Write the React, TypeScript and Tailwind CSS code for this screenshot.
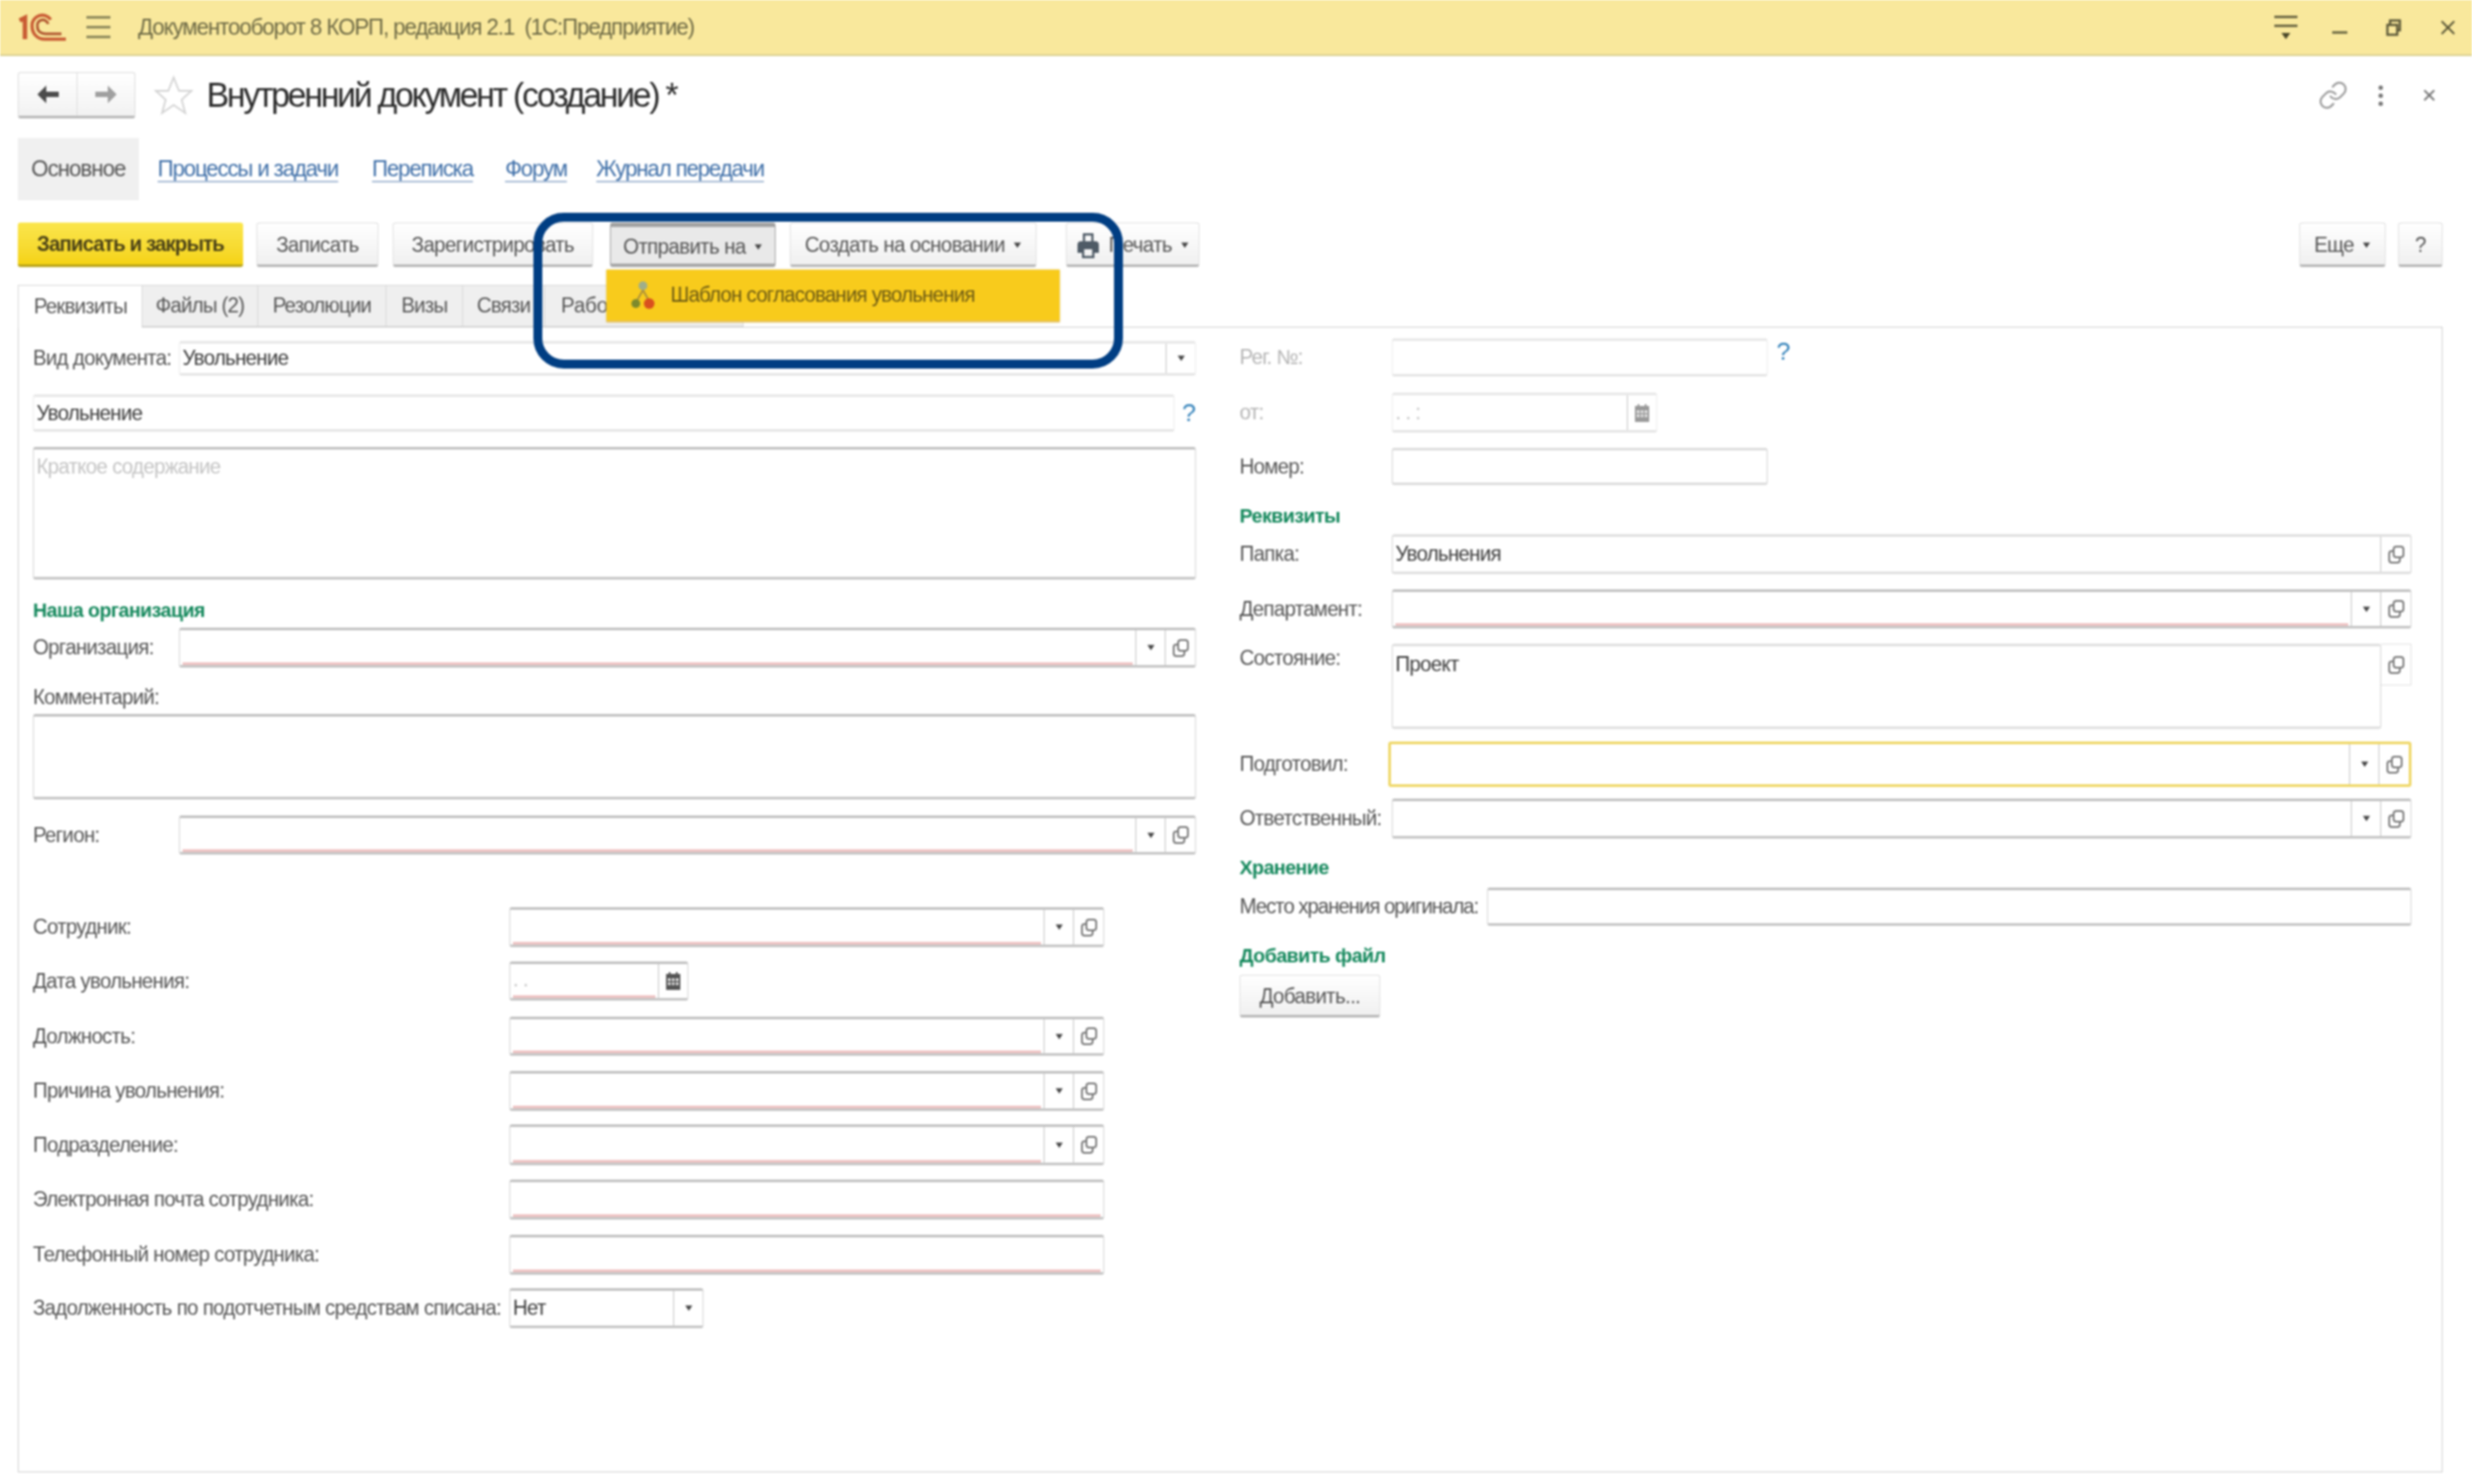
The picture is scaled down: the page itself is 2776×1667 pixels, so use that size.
import React from 'react';
import clsx from 'clsx';
import { Link as LinkIcon, X } from 'lucide-react';

const Caret = () => (
  <svg width="9" height="7" viewBox="0 0 9 7" className="shrink-0">
    <path d="M0.5 0.5h8L4.5 6.5z" fill="#444" />
  </svg>
);

const CopyIcon = () => (
  <svg width="20" height="24" viewBox="0 0 20 24" fill="none" stroke="#777" strokeWidth="2">
    <rect x="7" y="3" width="11" height="12" rx="3" />
    <path d="M7 8H5a3 3 0 0 0-3 3v7a3 3 0 0 0 3 3h6a3 3 0 0 0 3-3v-3" />
  </svg>
);

const CalendarIcon = ({ light }: { light?: boolean }) => (
  <svg width="18" height="22" viewBox="0 0 18 22" fill={light ? '#9a9a9a' : '#555'}>
    <path d="M1 3h3V1h2v2h6V1h2v2h3v18H1z" />
    <path d="M3 8h3v3H3zM7.5 8h3v3h-3zM12 8h3v3h-3zM3 12.5h3v3H3zM7.5 12.5h3v3h-3zM12 12.5h3v3h-3z" fill="#e8e8e8" />
  </svg>
);

const Heading = ({ className, children }: { className?: string; children: React.ReactNode }) => (
  <div className={clsx('h-[24px] flex items-center text-[22px] font-bold tracking-[-0.6px] text-[#14885c]', className)}>{children}</div>
);

type FieldProps = {
  className?: string;
  value?: string;
  required?: boolean;
  drop?: boolean;
  copy?: boolean;
  calendar?: boolean;
  disabled?: boolean;
  focus?: boolean;
  placeholder?: string;
};

const Field = ({ className, value, required, drop, copy, calendar, disabled, focus, placeholder }: FieldProps) => (
  <div
    className={clsx(
      'flex rounded-[3px] bg-white',
      disabled
        ? 'border border-[#ececec] border-t-[3px] border-t-[#e8e8e8] border-b-[3px] border-b-[#e6e6e6]'
        : focus
          ? 'border-[3px] border-[#efd765]'
          : 'border border-[#d4d4d4] border-t-[3px] border-t-[#c2c2c2] border-b-[3px] border-b-[#c6c6c6]',
      className,
    )}
  >
    <div className={clsx('flex-1 min-w-0 flex pl-[3px]', required && 'mx-[3px] !pl-0 border-b-[3px] border-b-[#efc3c3]')}>
      <span className={clsx('self-center text-[23px] tracking-[-0.8px]', placeholder ? 'text-[#c4c4c4]' : 'text-[#3c3c3c]')}>
        {value ?? placeholder}
      </span>
    </div>
    {drop && (
      <div className="w-[33px] shrink-0 flex items-center justify-center border-l border-[#c4c4c4]">
        <Caret />
      </div>
    )}
    {calendar && (
      <div className="w-[33px] shrink-0 flex items-center justify-center border-l border-[#c4c4c4]">
        <CalendarIcon light={disabled} />
      </div>
    )}
    {copy && (
      <div className="w-[34px] shrink-0 flex items-center justify-center border-l border-[#c4c4c4]">
        <CopyIcon />
      </div>
    )}
  </div>
);

const Label = ({ className, children, disabled }: { className?: string; children: React.ReactNode; disabled?: boolean }) => (
  <div className={clsx('shrink-0 text-[23px] tracking-[-0.8px]', disabled ? 'text-[#b4b4b4]' : 'text-[#555]', className)}>{children}</div>
);

const Button = ({
  className,
  children,
  caret,
  pressed,
}: {
  className?: string;
  children: React.ReactNode;
  caret?: boolean;
  pressed?: boolean;
}) => (
  <div
    className={clsx(
      'h-full shrink-0 flex items-center justify-center gap-[10px] pt-[3px] rounded-[3px] text-[23px] tracking-[-0.7px] text-[#555]',
      pressed
        ? 'border border-[#a0a0a0] border-t-[5px] border-t-[#a2a2a2] border-b-[4px] border-b-[#a8a8a8] bg-[#e9e9e9]'
        : 'border border-[#e0e0e0] border-b-[3px] border-b-[#b9b9b9] bg-linear-to-b from-white to-[#f0f0f0]',
      className,
    )}
  >
    {children}
    {caret && <Caret />}
  </div>
);

const Tab = ({ className, children, active }: { className?: string; children: React.ReactNode; active?: boolean }) => (
  <div
    className={clsx(
      'h-[47px] shrink-0 flex items-center border border-[#d8d8d8] text-[23px] tracking-[-0.9px] text-[#555]',
      active ? 'bg-white border-b-0 mb-[-1px] h-[48px] z-10 pl-[17px]' : 'bg-[#efefef] border-l-0 justify-center',
      className,
    )}
  >
    {children}
  </div>
);

const NavLink = ({ children, className }: { children: React.ReactNode; className?: string }) => (
  <span className={clsx('text-[25px] tracking-[-1.3px] text-[#3f6fa8] underline decoration-[#a9bdd6] decoration-2 underline-offset-[5px]', className)}>
    {children}
  </span>
);

const LongRow = ({ label, className, children }: { label: string; className?: string; children: React.ReactNode }) => (
  <div className={clsx('flex items-center', className)}>
    <Label className="w-[535px]">{label}</Label>
    {children}
  </div>
);

export default function App() {
  return (
    <div className="relative w-[2776px] h-[1667px] overflow-hidden bg-white blur-[0.8px] [font-family:'Liberation_Sans',sans-serif]">
      {/* Title bar */}
      <div className="h-[63px] flex items-center bg-[#f9e89c] border-b-2 border-b-[#dbd091] pl-[21px] pr-[14px]">
        <svg width="54" height="32" viewBox="0 0 54 32" fill="none" className="shrink-0">
          <path d="M1 8l6-3v24" stroke="#c85a33" strokeWidth="5" />
          <path d="M36 7A11.5 11.5 0 0 0 15 14c0 9 6 15 14 15h24" stroke="#c85a33" strokeWidth="3.5" />
          <path d="M33 12A6 6 0 0 0 21 15c0 5 4 8 9 8h18" stroke="#b0552f" strokeWidth="3" />
        </svg>
        <div className="ml-[22px] w-[27px] h-[25px] flex flex-col justify-between shrink-0">
          <div className="h-[3px] bg-[#8f8a5c]" />
          <div className="h-[3px] bg-[#8f8a5c]" />
          <div className="h-[3px] bg-[#8f8a5c]" />
        </div>
        <span className="ml-[31px] text-[25px] tracking-[-1.2px] whitespace-pre text-[#6f6b46]">Документооборот 8 КОРП, редакция 2.1  (1С:Предприятие)</span>
        <div className="ml-auto flex items-center">
          <svg width="28" height="30" viewBox="0 0 28 30" fill="none" stroke="#5c5838" strokeWidth="2.5">
            <path d="M1 3h26M1 13h26" />
            <path d="M9 21h10l-5 7z" fill="#4a4728" stroke="none" />
          </svg>
          <div className="ml-[38px] w-[17px] h-[3px] mt-[12px] bg-[#77734a]" />
          <svg width="18" height="20" viewBox="0 0 18 20" fill="none" stroke="#5c5838" strokeWidth="2.5" className="ml-[43px]">
            <path d="M2 7h11v11H2zM5 7V2h11v11h-3" />
          </svg>
          <X size={26} strokeWidth={2} color="#5c5838" className="ml-[39px]" />
        </div>
      </div>

      <div className="pl-[20px] pr-[33px]">
        {/* Document title */}
        <div className="mt-[18px] h-[52px] flex items-center">
          <div className="w-[132px] h-full flex rounded-[3px] border border-[#dcdcdc] border-b-[3px] border-b-[#b9b9b9] bg-linear-to-b from-white to-[#f2f2f2]">
            <div className="w-[66px] flex items-center justify-center border-r border-[#ddd]">
              <svg width="26" height="22" viewBox="0 0 26 22" fill="#4c4c4c">
                <path d="M11 1L1 11l10 10v-7h14V8H11z" />
              </svg>
            </div>
            <div className="flex-1 flex items-center justify-center">
              <svg width="26" height="22" viewBox="0 0 26 22" fill="#a0a0a0">
                <path d="M15 1l10 10-10 10v-7H1V8h14z" />
              </svg>
            </div>
          </div>
          <svg width="44" height="46" viewBox="0 0 44 46" fill="none" stroke="#d4d4d4" strokeWidth="2" className="ml-[21px]">
            <path d="M22 3l6 15h14L31 28l4 15-13-9-13 9 4-15L2 18h14z" />
          </svg>
          <span className="ml-[15px] text-[38px] tracking-[-2.55px] text-[#2a2a2a]">Внутренний документ (создание) *</span>
          <div className="ml-auto flex items-center">
            <LinkIcon size={34} strokeWidth={1.6} className="text-[#9a9a9a]" />
            <div className="ml-[34px] flex flex-col gap-[4px]">
              <div className="w-[5px] h-[5px] rounded-full bg-[#777]" />
              <div className="w-[5px] h-[5px] rounded-full bg-[#777]" />
              <div className="w-[5px] h-[5px] rounded-full bg-[#777]" />
            </div>
            <X size={20} strokeWidth={2.5} className="ml-[42px] mr-[5px] text-[#777]" />
          </div>
        </div>

        {/* Form navigation */}
        <div className="mt-[22px] h-[70px] flex items-center">
          <div className="w-[136px] h-full flex items-center justify-center bg-[#f0f0f0] text-[25px] tracking-[-1.1px] text-[#555]">Основное</div>
          <NavLink className="ml-[21px]">Процессы и задачи</NavLink>
          <NavLink className="ml-[38px]">Переписка</NavLink>
          <NavLink className="ml-[36px]">Форум</NavLink>
          <NavLink className="ml-[33px]">Журнал передачи</NavLink>
        </div>

        {/* Command bar */}
        <div className="mt-[25px] h-[50px] flex items-center">
          <div className="w-[253px] h-full flex items-center justify-center pt-[2px] rounded-[3px] border-b-[3px] border-b-[#b9a41c] bg-linear-to-b from-[#fbe64b] to-[#f5d312] text-[23px] font-bold tracking-[-1px] text-[#4a4116]">
            Записать и закрыть
          </div>
          <Button className="ml-[15px] w-[137px]">Записать</Button>
          <Button className="ml-[16px] w-[225px]">Зарегистрировать</Button>
          <Button className="ml-[19px] w-[186px]" caret pressed>
            Отправить на
          </Button>
          <Button className="ml-[16px] w-[277px]" caret>
            Создать на основании
          </Button>
          <Button className="ml-[33px] w-[150px]" caret>
            <svg width="26" height="30" viewBox="0 0 26 30" fill="#4f5b66" className="shrink-0">
              <path d="M7 1h12v9h2a4 4 0 0 1 4 4v9h-5v6H6v-6H1v-9a4 4 0 0 1 4-4h2zM9.5 3.5V10h7V3.5zM8.5 19v7.5h9V19z" fillRule="evenodd" />
            </svg>
            Печать
          </Button>
          <Button className="ml-auto w-[97px]" caret>
            Еще
          </Button>
          <Button className="ml-[14px] w-[50px]">?</Button>
        </div>

        {/* Tabs */}
        <div className="mt-[20px] flex items-end">
          <Tab active className="w-[140px]">Реквизиты</Tab>
          <Tab className="w-[130px]">Файлы (2)</Tab>
          <Tab className="w-[144px]">Резолюции</Tab>
          <Tab className="w-[86px]">Визы</Tab>
          <Tab className="w-[92px]">Связи</Tab>
          <Tab className="w-[223px] !justify-start pl-[18px] !tracking-[-0.2px]">Работа</Tab>
        </div>

        {/* Form panel */}
        <div className="h-[1287px] flex border border-[#cfcfcf]">
          <div className="w-[1322px] shrink-0 pl-[16px] flex flex-col">
            <div className="mt-[15px] h-[39px] flex items-center">
              <Label className="w-[164px]">Вид документа:</Label>
              <Field className="flex-1 h-full" value="Увольнение" drop disabled />
            </div>
            <div className="mt-[21px] h-[42px] flex items-center">
              <Field className="w-[1287px] h-full" value="Увольнение" disabled />
              <span className="ml-[8px] text-[28px] text-[#2f7fb8]">?</span>
            </div>
            <Field className="mt-[17px] h-[149px] items-start [&>div]:pt-[2px]" placeholder="Краткое содержание" />
            <Heading className="mt-[22px]">Наша организация</Heading>
            <div className="mt-[8px] h-[45px] flex items-center">
              <Label className="w-[164px]">Организация:</Label>
              <Field className="flex-1 h-full" required drop copy />
            </div>
            <Label className="mt-[16px] h-[24px]">Комментарий:</Label>
            <Field className="mt-[12px] h-[96px]" />
            <div className="mt-[18px] h-[44px] flex items-center">
              <Label className="w-[164px]">Регион:</Label>
              <Field className="flex-1 h-full" required drop copy />
            </div>

            <LongRow label="Сотрудник:" className="mt-[59px] h-[45px]">
              <Field className="w-[668px] h-full" required drop copy />
            </LongRow>
            <LongRow label="Дата увольнения:" className="mt-[16px] h-[44px]">
              <Field className="w-[201px] h-full" required calendar placeholder=". ." />
            </LongRow>
            <LongRow label="Должность:" className="mt-[18px] h-[44px]">
              <Field className="w-[668px] h-full" required drop copy />
            </LongRow>
            <LongRow label="Причина увольнения:" className="mt-[17px] h-[45px]">
              <Field className="w-[668px] h-full" required drop copy />
            </LongRow>
            <LongRow label="Подразделение:" className="mt-[15px] h-[46px]">
              <Field className="w-[668px] h-full" required drop copy />
            </LongRow>
            <LongRow label="Электронная почта сотрудника:" className="mt-[16px] h-[45px]">
              <Field className="w-[668px] h-full" required />
            </LongRow>
            <LongRow label="Телефонный номер сотрудника:" className="mt-[17px] h-[45px]">
              <Field className="w-[668px] h-full" required />
            </LongRow>
            <LongRow label="Задолженность по подотчетным средствам списана:" className="mt-[15px] h-[45px]">
              <Field className="w-[218px] h-full" value="Нет" drop />
            </LongRow>
          </div>

          <div className="ml-[49px] w-[1316px] shrink-0 flex flex-col">
            <div className="mt-[12px] h-[43px] flex items-center">
              <Label className="w-[171px]" disabled>Рег. №:</Label>
              <Field className="w-[422px] h-full" disabled />
              <span className="ml-[10px] mb-[14px] text-[28px] text-[#2f7fb8]">?</span>
            </div>
            <div className="mt-[18px] h-[45px] flex items-center">
              <Label className="w-[171px]" disabled>от:</Label>
              <Field className="w-[298px] h-full" disabled calendar placeholder=". .   :" />
            </div>
            <div className="mt-[17px] h-[42px] flex items-center">
              <Label className="w-[171px]">Номер:</Label>
              <Field className="w-[422px] h-full !border-t-[#dddddd] !border-b-[#dddddd]" />
            </div>
            <Heading className="mt-[22px]">Реквизиты</Heading>
            <div className="mt-[9px] h-[45px] flex items-center">
              <Label className="w-[171px]">Папка:</Label>
              <Field className="flex-1 h-full !border-t-[#e0e0e0] !border-b-[#e0e0e0]" value="Увольнения" copy />
            </div>
            <div className="mt-[17px] h-[44px] flex items-center">
              <Label className="w-[171px]">Департамент:</Label>
              <Field className="flex-1 h-full" required drop copy />
            </div>
            <div className="mt-[17px] h-[96px] flex items-start">
              <Label className="w-[171px] mt-[-1px]">Состояние:</Label>
              <div className="flex-1 h-full flex">
                <Field className="flex-1 h-full !border-t-[#e0e0e0] !border-b-[#e0e0e0] [&>div]:items-start [&>div]:pt-[3px] [&>div>span]:self-start" value="Проект" />
                <div className="w-[34px] h-[47px] flex items-center justify-center border border-l-0 border-[#e0e0e0]">
                  <CopyIcon />
                </div>
              </div>
            </div>
            <div className="mt-[14px] h-[51px] flex items-center">
              <Label className="w-[167px]">Подготовил:</Label>
              <Field className="w-[1153px] h-full" focus drop copy />
            </div>
            <div className="mt-[13px] h-[45px] flex items-center">
              <Label className="w-[171px]">Ответственный:</Label>
              <Field className="flex-1 h-full" drop copy />
            </div>
            <Heading className="mt-[20px]">Хранение</Heading>
            <div className="mt-[11px] h-[43px] flex items-center">
              <Label className="w-[278px] !tracking-[-1.2px]">Место хранения оригинала:</Label>
              <Field className="flex-1 h-full" />
            </div>
            <Heading className="mt-[21px]">Добавить файл</Heading>
            <div className="mt-[10px] h-[48px]">
              <Button className="w-[158px]">Добавить...</Button>
            </div>
          </div>
        </div>
      </div>

      {/* Open submenu over the tabs */}
      <div className="absolute left-[681px] top-[303px] w-[509px] h-[59px] flex items-center bg-[#f8cb1c] border-b-2 border-b-[#e8c25a] shadow-[0_0_2px_#d8c070]">
        <svg width="30" height="36" viewBox="0 0 30 36" className="ml-[26px] shrink-0">
          <circle cx="15" cy="7" r="5" fill="#9fae8a" />
          <path d="M15 12l-7 12M15 12l7 12" stroke="#a88d3c" strokeWidth="2" />
          <circle cx="7" cy="27" r="5" fill="#7d8a2c" />
          <circle cx="22" cy="27" r="6" fill="#d9501e" />
        </svg>
        <span className="ml-[16px] text-[23px] tracking-[-0.9px] text-[#6c5a14]">Шаблон согласования увольнения</span>
      </div>

      {/* Callout frame from the screenshot */}
      <div className="absolute left-[599px] top-[239px] w-[662px] h-[175px] rounded-[34px] border-[10px] border-[#003e83]" />
    </div>
  );
}
